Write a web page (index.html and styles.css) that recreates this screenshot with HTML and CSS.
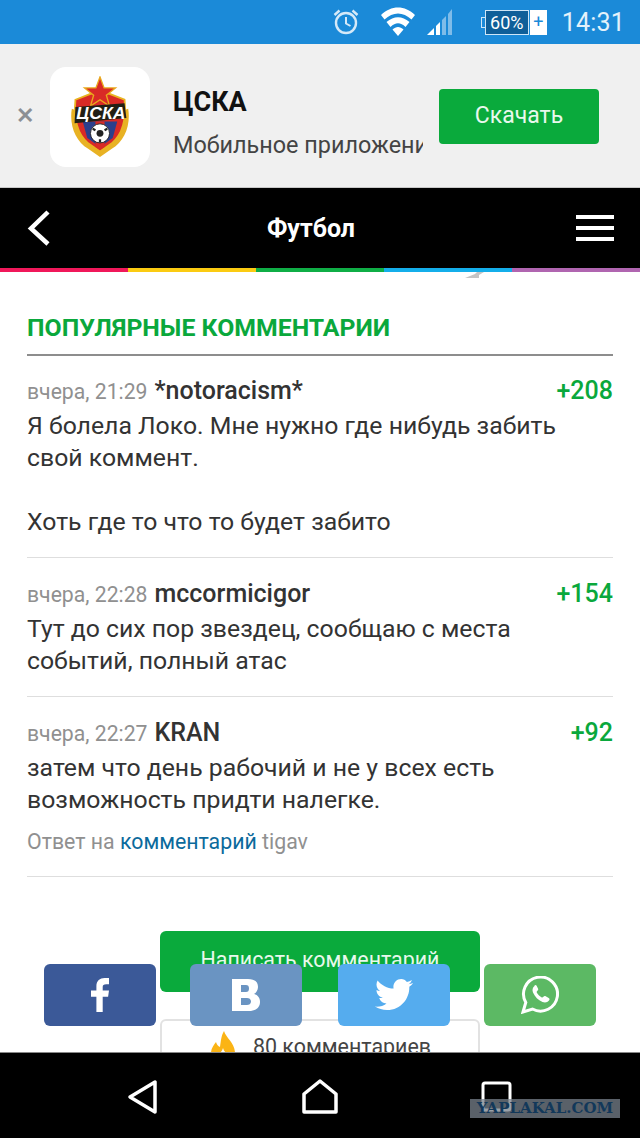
FILE: index.html
```html
<!DOCTYPE html>
<html lang="en">
<head>
    <meta charset="UTF-8" />
    <title>Футбол</title>
    <link rel="stylesheet" href="styles.css">
</head>
<body>
<div class="phone">
    <div class="status-bar">
        <svg class="icon-alarm" viewBox="0 0 28 28" width="28" height="28"><circle cx="14" cy="15" r="10" fill="none" stroke="#d5e9f8" stroke-width="2.4"/><path d="M14 9v6.500l4.500 2.500" fill="none" stroke="#d5e9f8" stroke-width="2"/><path d="M2.500 7l5-4.500M25.500 7l-5-4.500" stroke="#d5e9f8" stroke-width="2.4"/></svg>
        <svg class="icon-wifi" viewBox="0 0 34 30" width="34" height="30"><path d="M0 8C10-2 24-2 34 8L30.500 12.500C22 4.500 12 4.500 3.500 12.500Z" fill="#fff"/><path d="M5.500 15C13 8.500 21 8.500 28.500 15L24.500 20C19.500 15 14.500 15 9.500 20Z" fill="#fff"/><path d="M11.500 22.500C15 19 19 19 22.500 22.500L17 29Z" fill="#fff"/></svg>
        <svg class="icon-signal" viewBox="0 0 28 28" width="28" height="28"><path d="M1 27L8 20V27Z" fill="#fff"/><path d="M10 27V18L14 14V27Z" fill="#fff"/><path d="M16 27V12L20 8V27Z" fill="#7fbce9"/><path d="M22 27V6L26 1V27Z" fill="#7fbce9"/></svg>
        <div class="battery">
            <span class="battery-body">60%</span>
            <span class="battery-plus">+</span>
        </div>
        <span class="clock">14:31</span>
    </div>

    <div class="banner">
        <span class="banner-close">✕</span>
        <div class="app-icon">
            <svg viewBox="0 0 66 90" width="60" height="82">
                <path d="M2 36C-1 54 6 72 20 80l13 9 13-9c14-8 21-26 18-44l-6 2c1 14-3 28-14 34L33 80l-11-8C11 66 7 52 8 38z" fill="#e8b224"/>
                <path d="M6 26L24 19 33 25 42 19 60 26C62 46 58 64 46 74L33 83 20 74C8 64 4 46 6 26z" fill="#d92a26" stroke="#e9b320" stroke-width="2"/>
                <path d="M33 1l4.500 12H50l-10 8 3.500 12L33 26l-10.500 7L26 21 16 13h12.500z" fill="#d92a26" stroke="#e9a91d" stroke-width="1.500"/>
                <path d="M14 50h38L47 68 33 78 19 68z" fill="#2b3f8c"/>
                <path d="M28 50h10v28l-5 3-5-3z" fill="#d92a26"/>
                <path d="M6 34L60 30 62 46 5 52z" fill="#221f14"/>
                <text x="34" y="47" class="logo-text" text-anchor="middle" textLength="54" lengthAdjust="spacingAndGlyphs">ЦСКА</text>
                <circle cx="33" cy="63" r="10.500" fill="#fff" stroke="#222"/>
                <circle cx="33" cy="63" r="3.800" fill="#222"/>
                <path d="M25 58l3 1.500M41 58l-3 1.500M33 73v-3.500" stroke="#222" stroke-width="2.500"/>
            </svg>
        </div>
        <div class="banner-text">
            <div class="banner-title">ЦСКА</div>
            <div class="banner-sub">Мобильное приложение</div>
        </div>
        <div class="banner-btn">Скачать</div>
    </div>

    <div class="header">
        <svg class="header-back" viewBox="0 0 26 38" width="26" height="38"><path d="M22 3L5 19.500 22 35" fill="none" stroke="#fff" stroke-width="4.500"/></svg>
        <div class="header-title">Футбол</div>
        <div class="hamburger"><span></span><span></span><span></span></div>
    </div>
    <div class="color-strip">
        <span class="c-red"></span><span class="c-yellow"></span><span class="c-green"></span><span class="c-blue"></span><span class="c-purple"></span>
    </div>

    <div class="content">
        <svg class="clipped-pic" viewBox="0 0 20 6" width="20" height="6"><path d="M0 6L10 2 12 0H19L14 3 14 6z" fill="#c4c4c4"/></svg>
        <h2 class="section-title">ПОПУЛЯРНЫЕ КОММЕНТАРИИ</h2>

        <div class="comment">
            <div class="comment-meta">
                <span class="comment-date">вчера, 21:29</span>
                <span class="comment-author">*notoracism*</span>
                <span class="comment-score">+208</span>
            </div>
            <div class="comment-text">Я болела Локо. Мне нужно где нибудь забить свой коммент.<br><br>Хоть где то что то будет забито</div>
        </div>

        <div class="comment">
            <div class="comment-meta">
                <span class="comment-date">вчера, 22:28</span>
                <span class="comment-author">mccormicigor</span>
                <span class="comment-score">+154</span>
            </div>
            <div class="comment-text">Тут до сих пор звездец, сообщаю с места событий, полный атас</div>
        </div>

        <div class="comment">
            <div class="comment-meta">
                <span class="comment-date">вчера, 22:27</span>
                <span class="comment-author">KRAN</span>
                <span class="comment-score">+92</span>
            </div>
            <div class="comment-text">затем что день рабочий и не у всех есть возможность придти налегке.</div>
            <div class="comment-reply">Ответ на <a href="#">комментарий</a> tigav</div>
        </div>

        <div class="write-btn">Написать комментарий</div>
        <div class="comments-count">
            <svg viewBox="0 0 28 36" width="28" height="36"><path d="M15 1c2 7 11 12 11 22 0 7-5 12-12 12S2 30 2 23c0-5 3-8 5-11 1 3 2 4 4 5 1-6 1-11 4-16z" fill="#fbb415"/><path d="M14 18c1 4 5 6 5 10 0 3-2 5-5 5s-5-2-5-5c0-4 4-6 5-10z" fill="#fff"/></svg>
            <span>80 комментариев</span>
        </div>

        <div class="share-bar">
            <div class="share-btn share-fb">
                <svg viewBox="0 0 20 38" width="18" height="36"><path d="M6 38V21H0v-7h6V9c0-6 4-9 9-9h5v7h-3c-3 0-4 1-4 3v4h7l-1 7h-6v17z" fill="#fff"/></svg>
            </div>
            <div class="share-btn share-vk">
                <svg viewBox="0 0 28 32" width="28" height="32"><path fill-rule="evenodd" d="M0 0h16c7 0 10 3 10 8 0 3-2 6-4 7 4 1 6 4 6 8 0 6-5 9-11 9H0zM9 6v7h5c2 0 3-1 3-3.500S16 6 14 6zM9 19v7h6c2 0 4-1 4-3.500S17 19 15 19z" fill="#fff"/></svg>
            </div>
            <div class="share-btn share-tw">
                <svg viewBox="0 0 38 32" width="38" height="32"><path d="M38 4c-1.400.7-2.900 1-4.500 1.300 1.600-1 2.800-2.500 3.400-4.300-1.500.9-3.200 1.600-5 1.900C30.500 1.200 28.500 0 26.200 0c-4.300 0-7.800 3.500-7.800 7.800 0 .6.100 1.200.2 1.800C12.100 9.300 6.400 6.200 2.600 1.400 1.900 2.600 1.500 3.900 1.500 5.400c0 2.700 1.400 5.100 3.500 6.500-1.300 0-2.500-.4-3.500-1v.1c0 3.800 2.700 6.900 6.300 7.700-.7.200-1.400.3-2.100.3-.5 0-1 0-1.500-.1 1 3.100 3.900 5.400 7.300 5.500-2.700 2.100-6 3.300-9.700 3.300-.6 0-1.200 0-1.800-.1 3.500 2.200 7.600 3.500 12 3.500 14.400 0 22.300-11.900 22.300-22.300v-1C35.600 7 37 5.600 38 4z" fill="#fff"/></svg>
            </div>
            <div class="share-btn share-wa">
                <svg viewBox="0 0 38 38" width="38" height="38"><path d="M2 36l2.800-9.500A17 17 0 1 1 11.500 33z" fill="none" stroke="#fff" stroke-width="3"/><path d="M13.500 10c-2 1.500-2.500 4-1.500 6.500 2 4.500 5 7.500 9.500 9.500 2.500 1 5 .5 6.500-1.500.8-1 .7-2-.3-2.600l-3-1.700c-1-.5-1.700-.2-2.300.6-.6.800-1.200 1-2 .5-2-1.100-3.500-2.600-4.500-4.500-.4-.8-.2-1.400.5-2 .8-.6 1.100-1.300.6-2.300l-1.400-2.800c-.5-1-1.300-1-2.100-.2z" fill="#fff"/></svg>
            </div>
        </div>
    </div>

    <div class="nav-bar">
        <svg viewBox="0 0 32 36" width="32" height="36"><path d="M28 3v30L3 18z" fill="none" stroke="#fff" stroke-width="3.500" stroke-linejoin="round"/></svg>
        <svg viewBox="0 0 36 36" width="36" height="36"><path d="M2 33V15L18 2l16 13v18z" fill="none" stroke="#fff" stroke-width="3.500" stroke-linejoin="round"/></svg>
        <svg viewBox="0 0 32 32" width="32" height="32"><rect x="2" y="2" width="27" height="27" rx="2" fill="none" stroke="#fff" stroke-width="3"/></svg>
    </div>

    <div class="watermark">YAPLAKAL.COM</div>
</div>
</body>
</html>
```
FILE: styles.css
```css
html, body {
    margin: 0;
    padding: 0;
}

body {
    font-family: Roboto, "Liberation Sans", sans-serif;
    background: #fff;
}

.phone {
    position: relative;
    width: 640px;
    height: 1138px;
    overflow: hidden;
    display: flex;
    flex-direction: column;
}

.status-bar {
    height: 44px;
    flex: none;
    background: #1b8ad8;
    display: flex;
    align-items: center;
    justify-content: flex-end;
    padding-right: 15px;
    box-sizing: border-box;
}

.icon-alarm {
    margin-right: 21px;
}

.icon-wifi {
    margin-right: 11px;
}

.icon-signal {
    margin-right: 31px;
}

.battery {
    display: flex;
    align-items: center;
    margin-right: 15px;
}

.battery-body {
    position: relative;
    width: 42px;
    height: 23px;
    line-height: 23px;
    text-align: center;
    font-size: 18px;
    color: #fff;
    background: #0f5f99;
    border: 1px solid #cfe6f7;
}

.battery-body::before {
    content: "";
    position: absolute;
    left: -5px;
    top: 6px;
    width: 4px;
    height: 11px;
    border: 1px solid #cfe6f7;
    border-right: 0;
    box-sizing: border-box;
}

.battery-plus {
    width: 17px;
    height: 25px;
    margin-left: 1px;
    line-height: 24px;
    text-align: center;
    font-size: 18px;
    color: #1b8ad8;
    background: #fff;
}

.clock {
    font-size: 25px;
    color: #e3f1fb;
    letter-spacing: 0.2px;
}

.banner {
    height: 144px;
    flex: none;
    background: #f0f0f0;
    border-bottom: 1px solid #c8c8c8;
    box-sizing: border-box;
    display: flex;
    align-items: center;
}

.banner-close {
    width: 50px;
    text-align: center;
    font-size: 22px;
    font-weight: bold;
    color: #8b8f94;
}

.app-icon {
    width: 100px;
    height: 100px;
    margin-top: 2px;
    background: #fff;
    border-radius: 16px;
    display: flex;
    align-items: center;
    justify-content: center;
    flex: none;
}

.logo-text {
    font-family: "Liberation Sans", sans-serif;
    font-size: 18px;
    font-weight: bold;
    font-style: italic;
    fill: #fff;
}

.banner-text {
    width: 250px;
    margin-left: 23px;
    margin-top: 14px;
    overflow: hidden;
    white-space: nowrap;
}

.banner-title {
    font-size: 27px;
    font-weight: bold;
    color: #111;
    line-height: 32px;
    margin-bottom: 12px;
}

.banner-sub {
    font-size: 23.400px;
    color: #444;
    line-height: 30px;
}

.banner-btn {
    width: 160px;
    height: 55px;
    margin-left: 16px;
    margin-top: 2px;
    background: #0aaa3c;
    border-radius: 4px;
    color: #e8f8ed;
    font-size: 23px;
    line-height: 53px;
    text-align: center;
}

.header {
    height: 80px;
    flex: none;
    background: #000;
    display: flex;
    align-items: center;
    justify-content: space-between;
    padding: 0 26px;
    box-sizing: border-box;
}

.header-title {
    font-size: 25px;
    font-weight: bold;
    color: #fff;
    margin-left: -6px;
}

.hamburger {
    width: 38px;
    display: flex;
    flex-direction: column;
    gap: 7px;
}

.hamburger span {
    height: 4px;
    background: #fff;
}

.color-strip {
    height: 4px;
    flex: none;
    display: flex;
}

.color-strip span {
    flex: 1;
}

.c-red { background: #f0185a; }
.c-yellow { background: #fbcb12; }
.c-green { background: #0fae46; }
.c-blue { background: #14aeea; }
.c-purple { background: #b065b0; }

.content {
    position: relative;
    flex: 1;
    overflow: hidden;
    padding: 0 27px;
    background: #fff;
}

/* bottom edge of a picture that has scrolled under the header */
.clipped-pic {
    position: absolute;
    top: 0;
    left: 465px;
}

.section-title {
    margin: 41px 0 0;
    padding-bottom: 11px;
    font-size: 24.800px;
    line-height: 30px;
    font-weight: 700;
    color: #0aa83c;
    border-bottom: 2px solid #8d8d8d;
}

.comment {
    padding: 20px 0 19px;
    border-bottom: 1px solid #dedede;
}

.comment + .comment {
    padding-top: 21px;
}

.comment-meta {
    display: flex;
    align-items: baseline;
    line-height: 30px;
    margin-bottom: 3px;
}

.comment-date {
    font-size: 21.200px;
    color: #909090;
    margin-right: 7px;
}

.comment-author {
    font-size: 25px;
    font-weight: 500;
    color: #333;
}

.comment-score {
    margin-left: auto;
    font-size: 25px;
    font-weight: 500;
    color: #0aa83c;
}

.comment-text {
    font-size: 24.800px;
    line-height: 32px;
    color: #333;
}

.comment-reply {
    font-size: 21.300px;
    line-height: 28px;
    margin-top: 12px;
    margin-bottom: 1px;
    color: #909090;
}

.comment-reply a {
    color: #0b6a9c;
    text-decoration: none;
}

.write-btn {
    width: 320px;
    height: 61px;
    margin: 54px auto 0;
    background: #0aaa3c;
    border-radius: 6px;
    color: #e8f8ed;
    font-size: 21.400px;
    line-height: 58px;
    text-align: center;
}

.comments-count {
    width: 320px;
    height: 70px;
    margin: 27px auto 0;
    box-sizing: border-box;
    border: 2px solid #e2e2e2;
    border-radius: 6px;
    display: flex;
    align-items: flex-start;
    justify-content: center;
    gap: 16px;
    padding-top: 9px;
    font-size: 21.400px;
    line-height: 30px;
    color: #444;
}

.comments-count span {
    padding-top: 2px;
}

.share-bar {
    position: absolute;
    top: 692px;
    left: 44px;
    display: flex;
    gap: 34px;
}

.share-btn {
    width: 112px;
    height: 62px;
    border-radius: 6px;
    display: flex;
    align-items: center;
    justify-content: center;
}

.share-fb { background: #3b5998; }
.share-vk { background: #6a94c2; }
.share-tw { background: #55acee; margin-left: 2px; }
.share-wa { background: #5cb964; }

.nav-bar {
    height: 86px;
    flex: none;
    background: #000;
    border-top: 1px solid #888;
    box-sizing: border-box;
    display: flex;
    align-items: center;
    padding: 3px 0 0 127px;
    gap: 143px;
}

.watermark {
    position: absolute;
    right: 20px;
    bottom: 20px;
    width: 150px;
    height: 19px;
    background: rgba(120, 130, 140, 0.75);
    color: #12385a;
    font-family: "DejaVu Serif", serif;
    font-size: 15px;
    font-weight: bold;
    line-height: 19px;
    text-align: center;
}
```
